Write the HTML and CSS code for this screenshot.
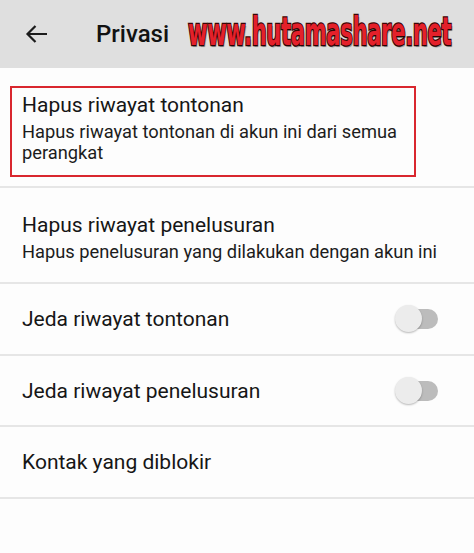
FILE: index.html
```html
<!DOCTYPE html>
<html lang="id">
<head>
<meta charset="utf-8">
<title>Privasi</title>
<link rel="stylesheet" href="styles.css">
</head>
<body>
<header class="topbar">
  <svg class="back" width="24" height="18" viewBox="0 0 24 18" aria-hidden="true">
    <path d="M22 9H2.5M10.5 1L2.5 9l8 8" fill="none" stroke="#1c1c1c" stroke-width="2.2" stroke-linecap="butt" stroke-linejoin="miter"/>
  </svg>
  <h1 class="title">Privasi</h1>
  <div class="mark-wrap"><span class="mark">www.hutamashare.net</span></div>
</header>
<main class="list">
  <div class="item item-first">
    <div class="highlight">
      <div class="item-title">Hapus riwayat tontonan</div>
      <div class="item-sub">Hapus riwayat tontonan di akun ini dari semua perangkat</div>
    </div>
  </div>
  <div class="item item-two">
    <div class="item-title">Hapus riwayat penelusuran</div>
    <div class="item-sub">Hapus penelusuran yang dilakukan dengan akun ini</div>
  </div>
  <div class="item item-single">
    <div class="item-title">Jeda riwayat tontonan</div>
    <span class="switch"><span class="track"></span><span class="thumb"></span></span>
  </div>
  <div class="item item-single">
    <div class="item-title">Jeda riwayat penelusuran</div>
    <span class="switch"><span class="track"></span><span class="thumb"></span></span>
  </div>
  <div class="item item-single">
    <div class="item-title">Kontak yang diblokir</div>
  </div>
</main>
</body>
</html>
```
FILE: styles.css
```css
html, body {
  margin: 0;
  padding: 0;
  background: #fdfdfd;
}
body {
  width: 474px;
  height: 553px;
  overflow: hidden;
  font-family: Roboto, "Noto Sans", "Liberation Sans", sans-serif;
  color: #1a1a1a;
}
.topbar {
  height: 68px;
  background: #dfdfdf;
  display: flex;
  align-items: center;
  padding-left: 25px;
  box-sizing: border-box;
}
.back {
  display: block;
  flex: none;
}
.title {
  margin: 0 0 0 47px;
  font-size: 24px;
  font-weight: 500;
  color: #121212;
  line-height: 28px;
  flex: none;
}
.mark-wrap {
  margin-left: 19px;
  width: 262px;
  height: 36px;
  overflow: visible;
  flex: none;
  position: relative;
}
.mark {
  position: absolute;
  left: 0;
  top: -6px;
  display: inline-block;
  white-space: nowrap;
  font-family: "DejaVu Sans Condensed", "DejaVu Sans", sans-serif;
  font-weight: bold;
  font-size: 39px;
  line-height: 44px;
  letter-spacing: -0.5px;
  color: #e4202a;
  -webkit-text-stroke: 2.5px #3a0606;
  paint-order: stroke fill;
  text-shadow: 2px 2px 1px rgba(0, 0, 0, 0.35);
  transform: scaleX(0.6);
  transform-origin: left center;
}
.list {
  display: flex;
  flex-direction: column;
}
.item {
  border-bottom: 2px solid #e6e6e6;
  box-sizing: border-box;
}
.item-title {
  font-size: 21px;
  line-height: 24px;
  color: #161616;
}
.item-sub {
  font-size: 18.3px;
  line-height: 21px;
  color: #1c1c1c;
  margin-top: 4px;
}
.item-first {
  padding: 18px 58px 9px 10px;
  height: 120px;
}
.highlight {
  border: 2px solid #d9272e;
  height: 91px;
  box-sizing: border-box;
  padding: 5px 10px 0 10px;
}
.item-two {
  height: 96px;
  padding: 25px 22px 0 22px;
}
.item-single {
  height: 72px;
  padding: 0 36px 0 22px;
  display: flex;
  align-items: center;
  justify-content: space-between;
}
.item-single:nth-child(4) {
  height: 71px;
}
.switch {
  position: relative;
  width: 43px;
  height: 28px;
  flex: none;
}
.track {
  position: absolute;
  right: 0;
  top: 4px;
  width: 38px;
  height: 20px;
  border-radius: 10px;
  background: #bcbcbc;
}
.thumb {
  position: absolute;
  left: 0;
  top: 0;
  width: 27px;
  height: 27px;
  border-radius: 50%;
  background: #ececec;
  box-shadow: 0 1px 2px rgba(0, 0, 0, 0.28);
}
```
